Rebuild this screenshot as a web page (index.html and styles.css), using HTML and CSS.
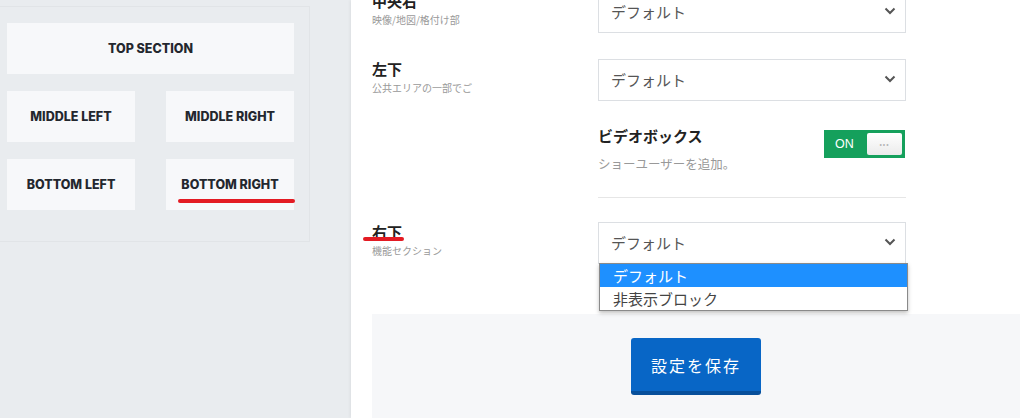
FILE: index.html
```html
<!DOCTYPE html>
<html lang="ja">
  <head>
    <meta charset="UTF-8" />
    <meta name="viewport" content="width=device-width, initial-scale=1.0" />
    <title>レイアウト設定</title>
    <link rel="stylesheet" href="styles.css">
  </head>
  <body>
    <div class="page">
      <aside class="layout-panel">
        <div class="layout-box">
          <div class="slot slot-wide">TOP SECTION</div>
          <div class="slot">MIDDLE LEFT</div>
          <div class="slot">MIDDLE RIGHT</div>
          <div class="slot">BOTTOM LEFT</div>
          <div class="slot slot-marked">BOTTOM RIGHT</div>
        </div>
      </aside>

      <main class="settings">
        <div class="field-row first">
          <div class="field-label">
            <h3>中央右</h3>
            <small>映像/地図/格付け部</small>
          </div>
          <div class="select">
            <span>デフォルト</span>
            <svg class="chevron" width="12" height="8" viewBox="0 0 12 8"><path d="M1.5 1.5 6 6l4.5-4.5" fill="none" stroke="#555" stroke-width="2"/></svg>
          </div>
        </div>

        <div class="field-row">
          <div class="field-label">
            <h3>左下</h3>
            <small>公共エリアの一部でご</small>
          </div>
          <div class="select">
            <span>デフォルト</span>
            <svg class="chevron" width="12" height="8" viewBox="0 0 12 8"><path d="M1.5 1.5 6 6l4.5-4.5" fill="none" stroke="#555" stroke-width="2"/></svg>
          </div>
        </div>

        <div class="toggle-row">
          <div></div>
          <div class="toggle-field">
            <div>
              <h3>ビデオボックス</h3>
              <p>ショーユーザーを追加。</p>
            </div>
            <div class="switch">
              <span class="switch-text">ON</span>
              <span class="switch-knob">•••</span>
            </div>
          </div>
        </div>

        <div class="field-row">
          <div class="field-label">
            <h3 class="title-marked">右下</h3>
            <small>機能セクション</small>
          </div>
          <div class="select open">
            <span>デフォルト</span>
            <svg class="chevron" width="12" height="8" viewBox="0 0 12 8"><path d="M1.5 1.5 6 6l4.5-4.5" fill="none" stroke="#555" stroke-width="2"/></svg>
            <ul class="dropdown">
              <li class="active">デフォルト</li>
              <li>非表示ブロック</li>
            </ul>
          </div>
        </div>

        <div class="save-bar">
          <button class="btn-save">設定を保存</button>
        </div>
      </main>
    </div>
  </body>
</html>
```

FILE: styles.css
```css
body {
  margin: 0;
  height: 418px;
  overflow: hidden;
  font-family: "Noto Sans CJK JP", "Noto Sans", sans-serif;
  background-color: #e9ecef;
}
.page {
  display: flex;
  height: 418px;
}
.layout-panel {
  width: 351px;
  flex-shrink: 0;
  padding-top: 6px;
  box-sizing: border-box;
}
.layout-box {
  margin-left: -1px;
  width: 311px;
  box-sizing: border-box;
  border: 1px solid #e1e4e7;
  padding: 16px 16px 31px 7px;
  display: grid;
  grid-template-columns: 128px 128px;
  column-gap: 31px;
  row-gap: 17px;
}
.slot {
  position: relative;
  height: 51px;
  background: #f7f8fa;
  display: flex;
  align-items: center;
  justify-content: center;
  font-family: Inter, "Liberation Sans", sans-serif;
  font-weight: 800;
  font-size: 12.5px;
  color: #23272e;
}
.slot-wide {
  grid-column: span 2;
}
.slot-marked::after {
  content: "";
  position: absolute;
  left: 12px;
  right: -1px;
  top: 40px;
  height: 4px;
  border-radius: 2px;
  background: #e31b23;
}

.settings {
  flex: 1;
  background: #fff;
  box-shadow: -1px 0 3px rgba(0, 0, 0, 0.06);
  padding: 0 4px 0 21px;
}
.field-row,
.toggle-row {
  display: grid;
  grid-template-columns: 226px 308px;
}
.field-row {
  margin-top: 26px;
}
.field-row.first {
  margin-top: -9px;
}
.field-label h3 {
  margin: 0;
  font-size: 15px;
  line-height: 20px;
  font-weight: 700;
  color: #222;
}
.field-label small {
  display: block;
  margin-top: 2px;
  font-size: 10px;
  line-height: 14px;
  color: #999;
}
.title-marked {
  position: relative;
}
.title-marked::after {
  content: "";
  position: absolute;
  left: -9px;
  top: 15px;
  width: 41px;
  height: 4px;
  border-radius: 2px;
  background: #e31b23;
}
.select {
  position: relative;
  height: 42px;
  box-sizing: border-box;
  border: 1px solid #dcdfe3;
  display: flex;
  align-items: center;
  justify-content: space-between;
  padding: 0 9px 2px 12px;
  font-size: 15px;
  color: #555;
}
.dropdown {
  position: absolute;
  left: 0;
  top: 40px;
  width: 309px;
  box-sizing: border-box;
  margin: 0;
  padding: 0;
  list-style: none;
  background: #fff;
  border: 1px solid #8a8a8a;
  box-shadow: 0 2px 4px rgba(0, 0, 0, 0.25);
  z-index: 2;
}
.dropdown li {
  height: 23px;
  line-height: 23px;
  padding-left: 13px;
  font-size: 15px;
  color: #444;
}
.dropdown li.active {
  background: #1e90ff;
  color: #fff;
}

.toggle-row {
  margin-top: 25px;
}
.toggle-field {
  display: flex;
  justify-content: space-between;
  align-items: flex-start;
  padding-bottom: 23px;
  border-bottom: 1px solid #e6e6e6;
}
.toggle-field h3 {
  margin: 0;
  font-size: 15px;
  line-height: 20px;
  color: #222;
}
.toggle-field p {
  margin: 8px 0 0;
  font-size: 12.5px;
  line-height: 20px;
  color: #999;
}
.switch {
  margin-top: 4px;
  margin-right: 1px;
  width: 81px;
  height: 28px;
  box-sizing: border-box;
  background: #15a05c;
  display: flex;
  align-items: center;
  justify-content: space-between;
  padding: 0 3px 0 11px;
}
.switch-text {
  font-family: "Liberation Sans", Arial, sans-serif;
  font-size: 12.5px;
  color: #fff;
}
.switch-knob {
  width: 35px;
  height: 22px;
  border-radius: 2px;
  background: linear-gradient(#ffffff, #ebebeb);
  color: #b5b5b5;
  font-size: 7px;
  letter-spacing: 1px;
  line-height: 22px;
  text-align: center;
}
.toggle-row + .field-row {
  margin-top: 24px;
}

.save-bar {
  margin-top: 50px;
  background: #f6f7f9;
  height: 120px;
  display: flex;
  justify-content: center;
  align-items: flex-start;
  padding-top: 24px;
  box-sizing: border-box;
}
.btn-save {
  width: 130px;
  height: 57px;
  background: #0866c6;
  border: none;
  border-bottom: 4px solid #074f9b;
  border-radius: 3px;
  color: #fff;
  font-family: "Noto Sans CJK JP", sans-serif;
  font-size: 16px;
  letter-spacing: 2px;
  cursor: pointer;
}
```
